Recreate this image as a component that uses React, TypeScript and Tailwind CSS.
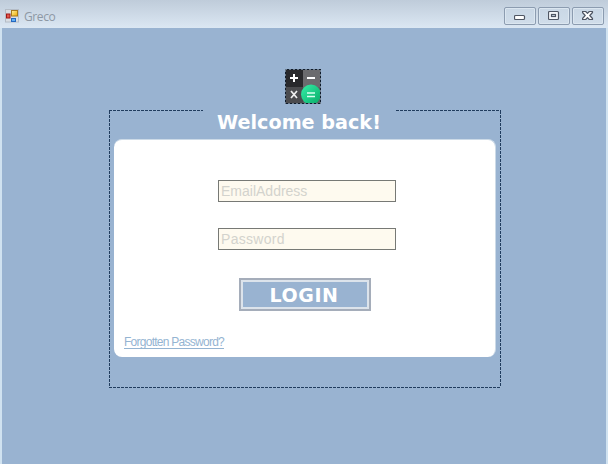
import React from "react";

function AppIcon() {
  return (
    <svg width="14" height="14" viewBox="0 0 14 14" aria-hidden="true">
      <defs>
        <linearGradient id="gold" x1="0" y1="0" x2="1" y2="1">
          <stop offset="0" stopColor="#fff3a0" />
          <stop offset="1" stopColor="#eda800" />
        </linearGradient>
      </defs>
      <rect x="0.5" y="0.5" width="13" height="12.5" fill="#d9dee4" stroke="#b4bcc6" />
      <rect x="6.5" y="1.5" width="6" height="5.5" fill="url(#gold)" stroke="#a87a1c" />
      <rect x="1.5" y="5" width="3.5" height="4" fill="#e2564a" stroke="#a01818" />
      <rect x="6.5" y="9.5" width="4" height="3" fill="#62b0f4" stroke="#2468c0" />
    </svg>
  );
}

function CaptionButton({ label, children }: { label: string; children: React.ReactNode }) {
  return (
    <button
      aria-label={label}
      className="flex h-[18px] w-8 items-center justify-center rounded-[2px] border border-[#8c9cb0] bg-linear-to-b from-[#c9d7e5] to-[#d0ddea] shadow-[inset_0_0_0_1px_#dbe6f0]"
    >
      {children}
    </button>
  );
}

function TitleBar() {
  return (
    <header className="flex h-7 shrink-0 items-start bg-linear-to-b from-[#bfccda] to-[#dbe7f3] pr-1 pl-[5px]">
      <div className="pt-[9px]">
        <AppIcon />
      </div>
      <span className="pt-[9px] pl-[5px] font-['Open_Sans',sans-serif] text-[12px] leading-4 tracking-[-0.4px] text-[#8d98a4]">
        Greco
      </span>
      <div className="ml-auto flex gap-[2px] pt-[7px]">
        <CaptionButton label="Minimize">
          <svg width="12" height="12" viewBox="0 0 12 12">
            <rect x="0.5" y="5.5" width="10" height="4" rx="1" fill="#fff" stroke="#4f5663" strokeWidth="1.2" />
          </svg>
        </CaptionButton>
        <CaptionButton label="Maximize">
          <svg width="12" height="12" viewBox="0 0 12 12">
            <rect x="0.5" y="1.5" width="10" height="8" rx="1" fill="#f4f7fa" stroke="#4f5663" strokeWidth="1.2" />
            <rect x="3.5" y="4.5" width="4" height="2" fill="#d5e0eb" stroke="#4f5663" strokeWidth="1.2" />
          </svg>
        </CaptionButton>
        <CaptionButton label="Close">
          <svg width="12" height="12" viewBox="0 0 12 12">
            <path
              d="M0.5 1.5h3.2L5.5 3.4l1.8-1.9h3.2v1L7.8 5.5l2.7 3v1H7.3L5.5 7.6 3.7 9.5H0.5v-1l2.7-3-2.7-3z"
              fill="#fff"
              stroke="#4f5663"
              strokeWidth="1.2"
              strokeLinejoin="round"
            />
          </svg>
        </CaptionButton>
      </div>
    </header>
  );
}

function CalculatorLogo() {
  return (
    <svg width="36" height="35" viewBox="0 0 36 35" aria-hidden="true">
      <defs>
        <linearGradient id="mint" x1="0" y1="0" x2="1" y2="1">
          <stop offset="0" stopColor="#35f0a8" />
          <stop offset="1" stopColor="#08a866" />
        </linearGradient>
      </defs>
      <rect width="36" height="35" fill="#5d5d60" />
      <rect width="18" height="18" fill="#29292c" />
      <rect x="18" width="18" height="18" fill="#6b6b6e" />
      <rect y="18" width="18" height="17" fill="#4b4b4e" />
      <circle cx="26" cy="25.5" r="10" fill="url(#mint)" />
      <path d="M5 9h8M9 5v8M22 9h8" stroke="#fff" strokeWidth="2" />
      <path d="M6 22l6 7M12 22l-6 7" stroke="#eee" strokeWidth="1.7" />
      <path d="M22 24h8M22 27.5h8" stroke="#d9fff0" strokeWidth="1.6" />
      <rect x="0.5" y="0.5" width="35" height="34" fill="none" stroke="#101c2c" />
      <rect x="0.5" y="0.5" width="35" height="34" fill="none" stroke="#c6d8e8" strokeDasharray="1 3" />
    </svg>
  );
}

const dashX = "h-px bg-[repeating-linear-gradient(to_right,#203c5e_0_3px,#9fb8d3_3px_4px)]";
const dashY = "w-px bg-[repeating-linear-gradient(to_bottom,#203c5e_0_3px,#9fb8d3_3px_4px)]";
const field =
  "block h-[22px] w-[178px] border border-[#777975] bg-[#fefaef] px-[2px] font-['Liberation_Sans',sans-serif] text-[14px] text-[#555] outline-none placeholder:text-[#d3d3cd] placeholder:opacity-100";

function LoginCard() {
  return (
    <form className="flex h-[218px] w-[382px] flex-col rounded-lg border-t border-r border-[#ccdae7] bg-white pt-[40px]">
      <div className="flex flex-col gap-[26px] pl-[104px]">
        <input className={field} placeholder="EmailAddress" aria-label="Email address" />
        <input
          className={`${field} tracking-[0.3px]`}
          placeholder="Password"
          aria-label="Password"
          type="password"
        />
      </div>
      <button
        type="button"
        className="mt-7 ml-[125px] flex h-[33px] w-[132px] items-center justify-center border-2 border-[#a5adba] bg-[#99b3d1] pt-px pr-[2px] font-['DejaVu_Sans',sans-serif] text-[19px] font-bold tracking-[0.6px] text-white shadow-[inset_0_0_0_2px_#dce3eb]"
      >
        LOGIN
      </button>
      <a
        href="#"
        className="mt-6 ml-[10px] self-start font-['Liberation_Sans',sans-serif] text-[12px] leading-[15px] tracking-[-0.74px] text-[#94b4d2] underline underline-offset-2"
      >
        Forgotten Password?
      </a>
    </form>
  );
}

export default function App() {
  return (
    <div className="flex h-[464px] w-[608px] flex-col overflow-hidden bg-[#99b3d1]">
      <TitleBar />
      <main className="flex grow flex-col border-x-2 border-[#d0e2f0] bg-[#99b3d1] pt-[41px] pl-[107px]">
        <div className="pl-[176px]">
          <CalculatorLogo />
        </div>
        <div className="mt-[6px] flex w-[392px] justify-between">
          <div className={`${dashX} w-[94px]`} />
          <div className={`${dashX} w-[105px]`} />
        </div>
        <section className="flex h-[276px] w-[392px]">
          <div className={dashY} />
          <div className="flex w-[390px] flex-col pl-1">
            <h1 className="flex h-[28px] items-start pl-[103px] font-['DejaVu_Sans',sans-serif] text-[19.2px] leading-[23px] font-bold whitespace-nowrap text-white">
              Welcome back!
            </h1>
            <LoginCard />
          </div>
          <div className={dashY} />
        </section>
        <div className={`${dashX} w-[392px]`} />
      </main>
    </div>
  );
}
